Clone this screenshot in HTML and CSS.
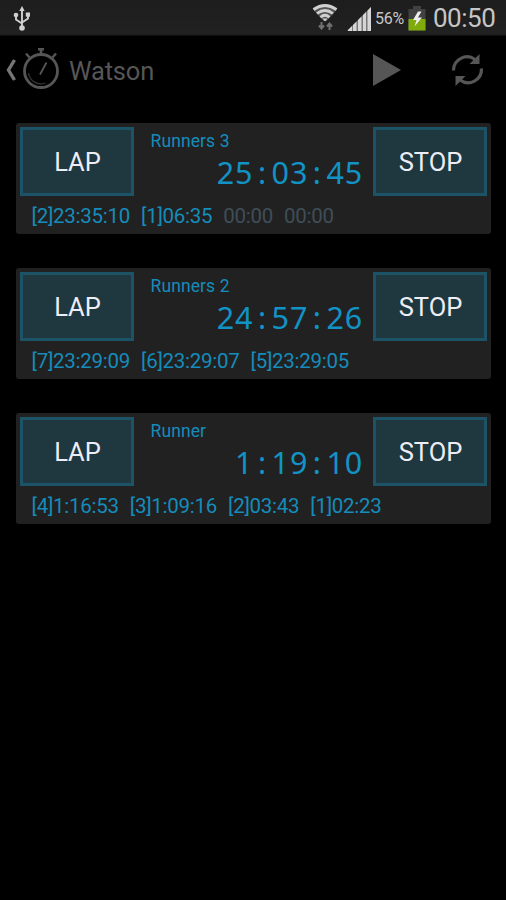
FILE: index.html
```html
<!DOCTYPE html>
<html lang="en">
<head>
    <meta charset="UTF-8">
    <meta name="viewport" content="width=device-width, initial-scale=1.0">
    <title>Watson</title>
    <link rel="stylesheet" href="styles.css">
</head>
<body>
    <div class="status">
        <svg class="usb" width="18" height="26" viewBox="0 0 18 26">
            <path d="M9 3v19M3 9v4.500l6 4M15 8v4.500l-6 4" fill="none" stroke="#d0d0d0" stroke-width="1.900"/>
            <path d="M9 0l2.700 5H6.300z" fill="#d0d0d0"/>
            <circle cx="3" cy="9" r="2.300" fill="#d0d0d0"/>
            <path d="M12.800 6.500h4.200v4.200h-4.200z" fill="#d0d0d0"/>
            <circle cx="9" cy="22" r="2.800" fill="#d0d0d0"/>
        </svg>
        <svg class="wifi" width="26" height="27" viewBox="0 0 26 27">
            <path d="M1 5.500Q13-3.500 25 5.500L14.500 17h-3z" fill="#555"/>
            <g fill="none" stroke="#d0d0d0" stroke-width="2.800">
                <path d="M1.500 5.500q11.500-8 23 0"/>
                <path d="M5 9.500q8-6 16 0"/>
                <path d="M8.500 13.300q4.500-4 9 0"/>
            </g>
            <path d="M10.500 14.500h5L13 17.500z" fill="#d0d0d0"/>
            <path d="M9.500 18v6M7 21.500l2.500 3 2.500-3M17.500 26v-6M15 22.500l2.500-3 2.500 3" fill="none" stroke="#727272" stroke-width="2"/>
        </svg>
        <svg class="signal" width="25" height="24" viewBox="0 0 25 24">
            <path d="M0 24L24 0v24z" fill="#777"/>
            <path d="M1 24v-1l4-4v5zM6 24v-6l3.500-3.500V24zM11 24V13l3.500-3.500V24zM16 24V8l3-3v19zM20.500 24V3.500L24 0v24z" fill="#d6d6d6"/>
        </svg>
        <span class="percent">56%</span>
        <svg class="battery" width="18" height="25" viewBox="0 0 18 25">
            <path d="M5 0h8v3h4.500v21.500H.5V3H5z" fill="#414141"/>
            <path d="M.5 13h17v11.500H.5z" fill="#7fac0c"/>
            <path d="M10 5.500L5 14h3.500L6.500 20.500l7.500-9h-4L13.500 5.500z" fill="#eee"/>
        </svg>
        <span class="clock">00:50</span>
    </div>

    <div class="bar">
        <svg class="back" width="10" height="22" viewBox="0 0 10 22">
            <path d="M8.500 1L2.500 11l6 10" fill="none" stroke="#757575" stroke-width="3.400"/>
        </svg>
        <svg class="watch" width="38" height="44" viewBox="0 0 38 44">
            <circle cx="19" cy="24" r="16.500" fill="none" stroke="#565656" stroke-width="2.800"/>
            <path d="M6.500 26a12.500 12.500 0 0 0 17 10" fill="none" stroke="#333" stroke-width="1.300"/>
            <path d="M19 3v5" stroke="#565656" stroke-width="2.600"/>
            <path d="M16 1h6v2.500h-6z" fill="#565656"/>
            <path d="M4 6.500l3.500 4M34 6.500l-3.500 4" stroke="#565656" stroke-width="2.400"/>
            <path d="M24.500 15.500l-6.500 12" stroke="#565656" stroke-width="1.800"/>
        </svg>
        <span class="title">Watson</span>
        <svg class="play" width="28" height="32" viewBox="0 0 28 32">
            <path d="M0 0l28 16L0 32z" fill="#565656"/>
        </svg>
        <svg class="reset" width="33" height="34" viewBox="0 0 33 34">
            <g fill="none" stroke="#565656" stroke-width="3.200">
                <path d="M2.500 17.500A13.500 13.500 0 0 1 24 6.500"/>
                <path d="M30.500 15.500A13.500 13.500 0 0 1 9 27"/>
            </g>
            <path d="M28.500 1v10h-10zM4.500 33V23h10z" fill="#565656"/>
        </svg>
    </div>

    <div class="timers">
        <div class="timer">
            <div class="row">
                <button class="btn">LAP</button>
                <div class="info">
                    <div class="name">Runners 3</div>
                    <div class="time">25<i>:</i>03<i>:</i>45</div>
                </div>
                <button class="btn">STOP</button>
            </div>
            <div class="laps">
                <span>[2]23:35:10</span>
                <span>[1]06:35</span>
                <span class="empty">00:00</span>
                <span class="empty">00:00</span>
            </div>
        </div>
        <div class="timer">
            <div class="row">
                <button class="btn">LAP</button>
                <div class="info">
                    <div class="name">Runners 2</div>
                    <div class="time">24<i>:</i>57<i>:</i>26</div>
                </div>
                <button class="btn">STOP</button>
            </div>
            <div class="laps">
                <span>[7]23:29:09</span>
                <span>[6]23:29:07</span>
                <span>[5]23:29:05</span>
            </div>
        </div>
        <div class="timer">
            <div class="row">
                <button class="btn">LAP</button>
                <div class="info">
                    <div class="name">Runner</div>
                    <div class="time">1<i>:</i>19<i>:</i>10</div>
                </div>
                <button class="btn">STOP</button>
            </div>
            <div class="laps">
                <span>[4]1:16:53</span>
                <span>[3]1:09:16</span>
                <span>[2]03:43</span>
                <span>[1]02:23</span>
            </div>
        </div>
    </div>
</body>
</html>
```
FILE: styles.css
```css
* {
    box-sizing: border-box;
}
body {
    margin: 0;
    height: 900px;
    background-color: #000;
    font-family: Roboto, sans-serif;
    overflow: hidden;
}
svg {
    display: block;
    flex: none;
}
.status {
    display: flex;
    align-items: flex-start;
    height: 36px;
    padding: 0 10px 0 13px;
    background: linear-gradient(#1d1d1d, #212121 34px, #0c0c0c);
    color: #c6c6c6;
}
.usb {
    margin-top: 6px;
}
.wifi {
    margin: 4px 0 0 auto;
}
.signal {
    margin: 7px 0 0 9px;
}
.percent {
    width: 31px;
    margin-left: 3px;
    font-size: 16px;
    line-height: 37px;
    letter-spacing: -0.2px;
}
.battery {
    margin: 6px 0 0 2px;
}
.clock {
    width: 63px;
    margin-left: 7px;
    font-size: 26px;
    line-height: 37px;
    letter-spacing: -0.5px;
}
.bar {
    display: flex;
    align-items: center;
    height: 68px;
    padding: 0 22px 0 6px;
}
.watch {
    margin: -2px 0 0 6px;
}
.title {
    margin: 1px 0 0 9px;
    font-size: 25.5px;
    letter-spacing: -0.2px;
    color: #565656;
}
.play {
    margin-left: auto;
}
.reset {
    margin-left: 50px;
}
.timers {
    display: flex;
    flex-direction: column;
    gap: 34px;
    padding: 19px 15px 0 16px;
}
.timer {
    height: 111px;
    padding: 4px 4px 0;
    border-radius: 3px;
    background-color: #212121;
    color: #158cbb;
}
.row {
    display: flex;
    height: 69px;
}
.btn {
    width: 114px;
    height: 69px;
    padding: 1px 0 0 1px;
    border: 3px solid #1d5366;
    background-color: #1f373f;
    color: #ededf5;
    font-family: Roboto, sans-serif;
    font-size: 25.5px;
}
.info {
    flex: 1;
    padding: 3px 11px 0 16.5px;
}
.name {
    font-size: 17.5px;
    line-height: 22px;
    letter-spacing: 0.1px;
}
.time {
    margin-right: -1px;
    font-family: "Noto Sans", sans-serif;
    font-size: 30.5px;
    line-height: 41px;
    letter-spacing: 0.85px;
    text-align: right;
    white-space: nowrap;
    color: #1293c6;
}
.time i {
    margin: 0 4.6px;
    font-style: normal;
}
.laps {
    display: flex;
    gap: 11px;
    padding: 8px 0 0 11.5px;
    font-size: 20.5px;
    line-height: 25px;
    letter-spacing: -0.27px;
}
.empty {
    color: #3f4e58;
}
```
